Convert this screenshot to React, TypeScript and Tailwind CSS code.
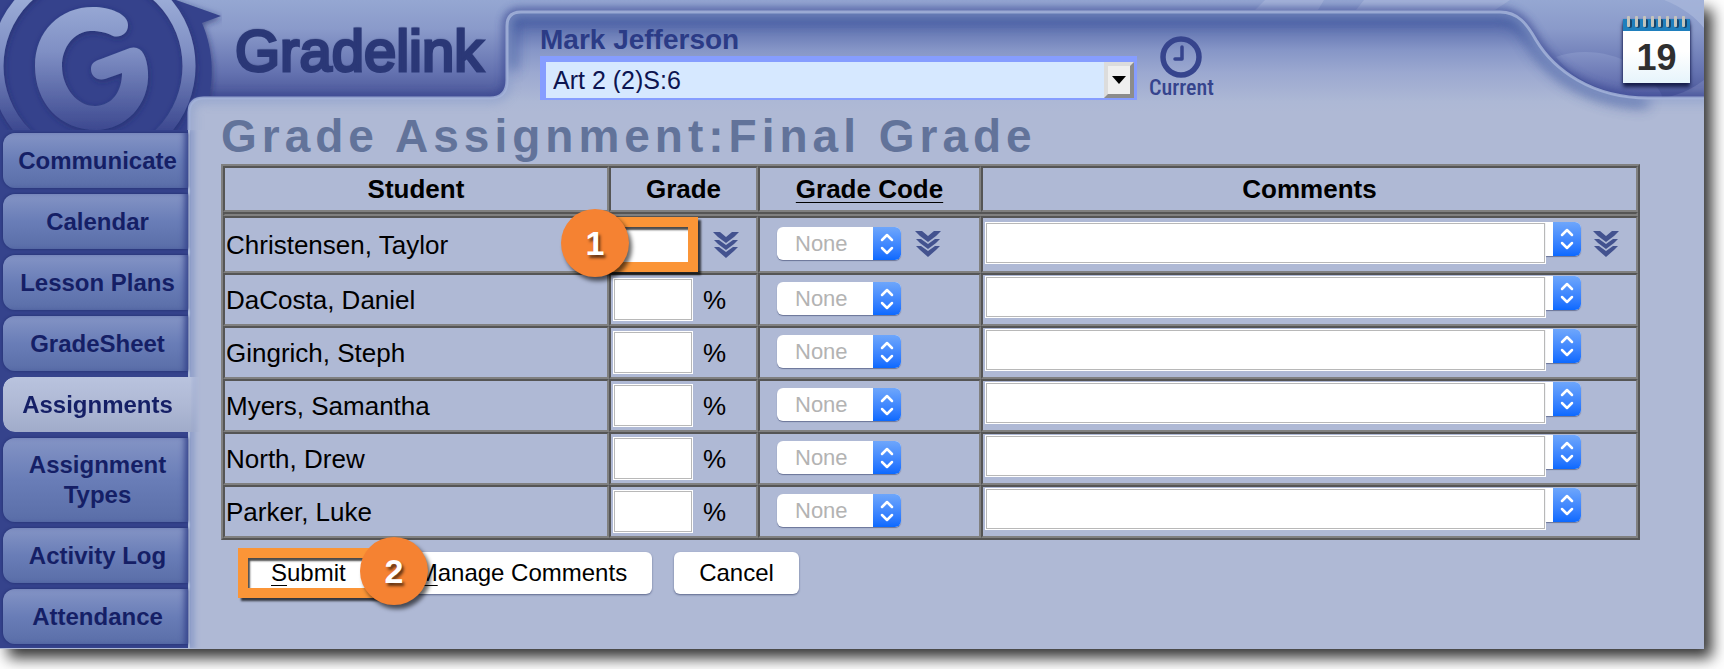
import { ReactNode } from "react";

const students = [
  "Christensen, Taylor",
  "DaCosta, Daniel",
  "Gingrich, Steph",
  "Myers, Samantha",
  "North, Drew",
  "Parker, Luke",
];

const navItems = [
  "Communicate",
  "Calendar",
  "Lesson Plans",
  "GradeSheet",
  "Assignments",
  "Assignment Types",
  "Activity Log",
  "Attendance",
];

// Bevelled cell edges, the table itself carries the opposite bevel
const cellClass = "border-2 border-t-[#555] border-l-[#555] border-r-[#808080] border-b-[#808080]";
const boxClass = "bg-white border border-white outline-1 -outline-offset-2 outline-[#b8b8b8]";
const buttonClass =
  "h-[42px] px-[25px] rounded-md bg-white text-2xl text-black shadow-[0_1px_2px_rgba(60,70,110,0.7)]";

function HeaderArt() {
  const edge =
    "M189 140V113Q189 98 204 98H490Q507 98 507 80V26Q507 12 521 12H1500C1518 12 1527 24 1536 40C1554 70 1592 98 1648 98H1710";
  const shape = `${edge}V140Z`;

  return (
    <svg
      className="absolute inset-x-0 top-0 w-full h-[130px]"
      viewBox="0 0 1704 130"
      preserveAspectRatio="none"
      aria-hidden="true"
    >
      <defs>
        <linearGradient id="banner" x1="0" y1="0" x2="0" y2="97" gradientUnits="userSpaceOnUse">
          <stop offset="0" stopColor="#95a7d2" />
          <stop offset="0.3" stopColor="#8a9aca" />
          <stop offset="0.75" stopColor="#6472b0" />
          <stop offset="1" stopColor="#4b5799" />
        </linearGradient>
        <linearGradient id="page" x1="0" y1="12" x2="0" y2="112" gradientUnits="userSpaceOnUse">
          <stop offset="0" stopColor="#4c60a4" />
          <stop offset="0.12" stopColor="#5c6fae" />
          <stop offset="0.38" stopColor="#8696c7" />
          <stop offset="0.6" stopColor="#9ba8d0" />
          <stop offset="0.9" stopColor="#adb8d5" />
          <stop offset="1" stopColor="#afb9d5" />
        </linearGradient>
        <linearGradient id="swirl" x1="0" y1="0" x2="0" y2="1">
          <stop offset="0" stopColor="#8493c6" />
          <stop offset="1" stopColor="#5661a6" />
        </linearGradient>
        <filter id="soft" x="-5%" y="-40%" width="110%" height="180%">
          <feGaussianBlur stdDeviation="4" />
        </filter>
        <filter id="softer" x="-5%" y="-40%" width="110%" height="180%">
          <feGaussianBlur stdDeviation="7" />
        </filter>
        <clipPath id="page-clip">
          <path d={shape} />
        </clipPath>
      </defs>
      <rect width="1704" height="130" fill="url(#banner)" />
      <rect y="97" width="188" height="33" fill="#35438c" />
      <path d="M1265 0H1324L1318 10H1255ZM1364 0H1510L1495 10H1356Z" fill="#b3c0e0" opacity="0.5" />
      <path d="M1664 0C1684 8 1696 18 1704 28V0Z" fill="#aab8dc" opacity="0.7" />
      <path d="M1556 57C1580 48 1612 52 1630 64C1650 76 1668 98 1660 98H1640C1600 92 1575 80 1556 57Z" fill="url(#swirl)" />
      <path d="M1704 80C1696 86 1684 94 1664 98H1704Z" fill="#7884bb" opacity="0.6" />
      <path d={edge} fill="none" stroke="#34438f" strokeWidth="8" opacity="0.75" filter="url(#soft)" />
      <path d={shape} fill="url(#page)" />
      <g clipPath="url(#page-clip)">
        <path
          d="M507 70V26Q507 12 521 12H1500C1518 12 1527 24 1536 40C1554 70 1592 98 1648 98"
          fill="none"
          stroke="#34509a"
          strokeWidth="18"
          opacity="0.7"
          filter="url(#softer)"
        />
        <path d={edge} fill="none" stroke="#8fa0cb" strokeWidth="12" opacity="0.6" filter="url(#soft)" />
      </g>
      <path d={edge} fill="none" stroke="#a3b3d9" strokeWidth="3" opacity="0.85" />
    </svg>
  );
}

function Logo() {
  return (
    <svg className="block w-[222px] h-[130px]" viewBox="0 0 222 130" role="img" aria-label="Gradelink logo">
      <defs>
        <linearGradient id="metal" x1="0" y1="0" x2="0" y2="130" gradientUnits="userSpaceOnUse">
          <stop offset="0" stopColor="#9aabd6" />
          <stop offset="0.4" stopColor="#7f8fc4" />
          <stop offset="1" stopColor="#3d4990" />
        </linearGradient>
        <clipPath id="logo-clip">
          <path d="M0 0H222V96H203Q187 96 187 112V130H0Z" />
        </clipPath>
        <filter id="drop" x="-20%" y="-20%" width="140%" height="140%">
          <feDropShadow dx="1" dy="2" stdDeviation="3" floodColor="#1c2766" floodOpacity="0.6" />
        </filter>
      </defs>
      <g clipPath="url(#logo-clip)">
        <path d="M0 0H176L221 16L202 23C214 50 215 85 205 108L190 130H0Z" fill="#35438c" filter="url(#drop)" />
        <circle cx="93" cy="66" r="96" fill="none" stroke="url(#metal)" strokeWidth="13" filter="url(#drop)" />
        <path
          d="M113 36C103 31 96 31 90 31C74 32 62 47 62 66C62 88 78 107 96 106C112 105 122 92 122 73L105 79C97 81 91 76 91 69C91 63 95 61 101 59L130 48C141 45 147 55 148 72C150 105 125 130 96 130C60 130 35 103 35 66C35 31 60 7 93 7C110 7 128 14 128 25C128 34 120 38 113 36Z"
          fill="url(#metal)"
          filter="url(#drop)"
        />
      </g>
    </svg>
  );
}

function NavTab({ label, active }: { label: string; active: boolean }) {
  return (
    <a
      href="#"
      aria-current={active ? "page" : undefined}
      className={
        active
          ? "flex items-center justify-center min-h-[55px] -mr-3 pl-2 pr-4 rounded-l-xl bg-linear-to-b from-[#b9c3de] via-[#afb9d5] to-[#a0abca] text-center [mask-image:linear-gradient(to_right,black_95%,transparent)]"
          : "flex items-center justify-center min-h-[55px] pl-3 pr-2 py-3 rounded-l-xl bg-linear-to-b from-[#8494c5] via-[#697db7] to-[#5a6ea8] text-center shadow-[0_0_3px_#1f2b6d,inset_-6px_0_6px_-3px_#35438c]"
      }
    >
      {label}
    </a>
  );
}

function FillDown() {
  return (
    <button type="button" aria-label="Fill down" className="block shrink-0">
      <svg className="block w-[26px] h-[27px]" viewBox="0 0 26 27" fill="#43528f">
        <path d="M0 1H7L13 6L19 1H26L21 6L13 12L5 6Z" />
        <path d="M1 9H6L13 14L20 9H25L21 13L13 19L5 13Z" />
        <path d="M1 16H6L13 21L20 16H25L21 20L13 27L5 20Z" />
      </svg>
    </button>
  );
}

function Stepper() {
  return (
    <span className="absolute right-0 inset-y-0 w-7 flex items-center justify-center rounded-r-md bg-linear-to-b from-[#6ea6fb] to-[#0a69ff] pointer-events-none">
      <svg
        className="w-4 h-6"
        viewBox="0 0 16 24"
        fill="none"
        stroke="white"
        strokeWidth="2.5"
        strokeLinecap="round"
        strokeLinejoin="round"
      >
        <path d="M3 8L8 3L13 8M3 16L8 21L13 16" />
      </svg>
    </span>
  );
}

function Badge({ children, className }: { children: ReactNode; className: string }) {
  return (
    <span
      className={`absolute z-10 size-[68px] rounded-full bg-[#f58232] flex items-center justify-center text-[34px] leading-none font-bold text-white [text-shadow:2px_3px_3px_rgba(0,0,0,0.6)] shadow-[3px_4px_4px_rgba(0,0,0,0.6)] ${className}`}
    >
      {children}
    </span>
  );
}

function Frame({ className }: { className: string }) {
  return (
    <span
      className={`absolute border-10 border-[#fb9537] shadow-[3px_3px_2px_rgba(0,0,0,0.7),inset_2px_3px_2px_rgba(0,0,0,0.7)] pointer-events-none ${className}`}
    />
  );
}

function StudentRow({ name, first }: { name: string; first: boolean }) {
  return (
    <tr className={first ? "h-[57px]" : "h-[53px]"}>
      <td className={`${cellClass} pl-px`}>{name}</td>
      <td className={`${cellClass} pl-0.5`}>
        <div className="relative flex items-center">
          <input type="text" aria-label={`Grade for ${name}`} className={`${boxClass} w-20 h-[43px] px-2`} />
          {first ? (
            <>
              <Frame className="-left-2.5 -inset-y-[6px] w-[95px]" />
              <Badge className="-left-[52px] -top-3.5">1</Badge>
              <span className="ml-5">
                <FillDown />
              </span>
            </>
          ) : (
            <span className="ml-2.5">%</span>
          )}
        </div>
      </td>
      <td className={`${cellClass} pl-[17px] pb-0.5`}>
        <div className="flex items-center gap-3.5">
          <span className="relative">
            <select
              aria-label={`Grade code for ${name}`}
              className="block appearance-none w-[124px] h-[33px] pl-[18px] rounded-md bg-white text-[22px] leading-none text-[#b3b3b3] shadow-[0_1px_1px_rgba(60,70,110,0.6)]"
            >
              <option>None</option>
            </select>
            <Stepper />
          </span>
          {first && <FillDown />}
        </div>
      </td>
      <td className={`${cellClass} align-top pl-0.5 ${first ? "pt-1" : "pt-px"}`}>
        <div className="flex items-start pr-[55px]">
          <input type="text" aria-label={`Comment for ${name}`} className={`${boxClass} flex-1 min-w-0 h-[42px] px-2`} />
          <span className="relative">
            <select
              aria-label={`Saved comments for ${name}`}
              className="block appearance-none w-[35px] h-[34px] rounded-r-md bg-white text-transparent shadow-[0_1px_1px_rgba(60,70,110,0.6)]"
            />
            <Stepper />
          </span>
          {first && (
            <span className="pt-2 pl-3 -mr-[38px]">
              <FillDown />
            </span>
          )}
        </div>
      </td>
    </tr>
  );
}

function CalendarIcon() {
  return (
    <a
      href="#"
      className="w-[67px] h-[63px] shrink-0 bg-linear-to-b from-white via-white to-[#e6f4fb] shadow-[0_4px_4px_#161d4a,0_0_2px_#22306e] flex flex-col"
    >
      <svg className="block w-full h-3 overflow-visible" viewBox="0 0 67 12" aria-hidden="true">
        <rect y="-1" width="67" height="12" fill="#1f7fbd" />
        {[6, 14, 22, 30, 37, 45, 53, 61].map((x) => (
          <g key={x}>
            <rect x={x - 1} y="-1" width="4" height="9" rx="2" fill="#17456d" />
            <rect x={x - 2} y="-4" width="3" height="11" rx="1" fill="#c4c4bc" />
          </g>
        ))}
      </svg>
      <span className="flex-1 flex items-center justify-center text-[36px] leading-none font-bold text-[#2f2f2f]">
        19
      </span>
    </a>
  );
}

export default function App() {
  return (
    <div className="bg-white pr-5 pb-5 font-['Liberation_Sans',Arial,sans-serif]">
      <div className="relative bg-[#afb9d5] shadow-[8px_9px_14px_rgba(0,0,0,0.8)]">
        <HeaderArt />
        <div className="relative flex">
          {/* Sidebar */}
          <nav className="w-[188px] shrink-0 text-2xl leading-[30px] font-bold text-[#151f66]">
            <Logo />
            <div className="flex flex-col gap-1.5 pt-[3px] pb-1 pl-[3px] bg-[#35438c] shadow-[2px_0_0_#b0bddb,5px_0_5px_2px_#92a1cb] [clip-path:inset(0_-14px_0_0)]">
              {navItems.map((label) => (
                <NavTab key={label} label={label} active={label === "Assignments"} />
              ))}
            </div>
          </nav>

          <main className="flex-1 min-w-0">
            {/* Header */}
            <header className="flex items-start h-28">
              <div className="w-[352px] shrink-0 pl-[47px] pt-4 text-[58px] leading-[70px] text-[#2b3877] [-webkit-text-stroke:3px_#2b3877] [text-shadow:0_-1px_2px_#1b2558]">
                Gradelink
              </div>
              <div className="pt-6 w-[597px]">
                <label htmlFor="class-select" className="block text-[28px] leading-8 font-bold text-[#2b3b86]">
                  Mark Jefferson
                </label>
                <div className="relative">
                  <select
                    id="class-select"
                    className="block appearance-none w-full h-11 pl-[7px] border-t-6 border-l-6 border-r-3 border-b-2 border-[#869dff] bg-[#d6e8ff] text-[25px] leading-none text-[#0d1450]"
                  >
                    <option>Art 2 (2)S:6</option>
                  </select>
                  <span className="absolute right-[3px] top-1.5 bottom-0.5 w-[30px] flex items-center justify-center bg-[#efefef] border-4 border-t-[#dcdcdc] border-l-[#dcdcdc] border-r-[#8c8c8c] border-b-[#8c8c8c] pointer-events-none">
                    <svg className="w-3.5 h-2" viewBox="0 0 14 8">
                      <path d="M0 0H14L7 8Z" fill="black" />
                    </svg>
                  </span>
                </div>
              </div>
              <a
                href="#"
                className="shrink-0 mt-9 ml-3 flex flex-col items-center text-[22px] leading-5 font-medium text-[#36448d] font-['Roboto_Condensed',Roboto,sans-serif]"
              >
                <svg className="w-[42px] h-[42px]" viewBox="0 0 42 42" fill="none" stroke="currentColor">
                  <circle cx="21" cy="21" r="18" strokeWidth="5.5" />
                  <path d="M22 11V23H15" strokeWidth="3.5" strokeLinecap="round" strokeLinejoin="round" />
                </svg>
                Current
              </a>
              <div className="ml-auto mr-3.5 pt-5">
                <CalendarIcon />
              </div>
            </header>

            <div className="pl-[33px] pr-16 pb-[55px]">
              <h1 className="mb-1 text-[46px] leading-[48px] font-bold tracking-[5px] text-[#62739a]">
                Grade Assignment:Final Grade
              </h1>

              {/* Grades */}
              <table className="w-full table-fixed border-separate border-spacing-0 border-2 border-t-[#808080] border-l-[#808080] border-r-[#555] border-b-[#555] text-[26px] leading-8 text-black">
                <colgroup>
                  <col className="w-[386px]" />
                  <col className="w-[149px]" />
                  <col className="w-[223px]" />
                  <col />
                </colgroup>
                <thead>
                  <tr className="h-[46px]">
                    <th className={cellClass}>Student</th>
                    <th className={cellClass}>Grade</th>
                    <th className={cellClass}>
                      <a href="#" className="underline decoration-1 underline-offset-4">
                        Grade Code
                      </a>
                    </th>
                    <th className={cellClass}>Comments</th>
                  </tr>
                  <tr aria-hidden="true">
                    <td colSpan={4} className={cellClass} />
                  </tr>
                </thead>
                <tbody>
                  {students.map((name, i) => (
                    <StudentRow key={name} name={name} first={i === 0} />
                  ))}
                </tbody>
              </table>

              {/* Actions */}
              <div className="flex items-center gap-[22px] mt-3 pl-[25px]">
                <div className="relative">
                  <button type="submit" className={buttonClass}>
                    <span className="underline decoration-1 underline-offset-4">S</span>ubmit
                  </button>
                  <Frame className="-left-2 -top-1 h-[50px] w-[142px]" />
                  <Badge className="left-[114px] -top-[15px]">2</Badge>
                </div>
                <button type="button" className={buttonClass}>
                  <span className="underline decoration-1 underline-offset-4">M</span>anage Comments
                </button>
                <button type="button" className={buttonClass}>
                  Cancel
                </button>
              </div>
            </div>
          </main>
        </div>
      </div>
    </div>
  );
}
